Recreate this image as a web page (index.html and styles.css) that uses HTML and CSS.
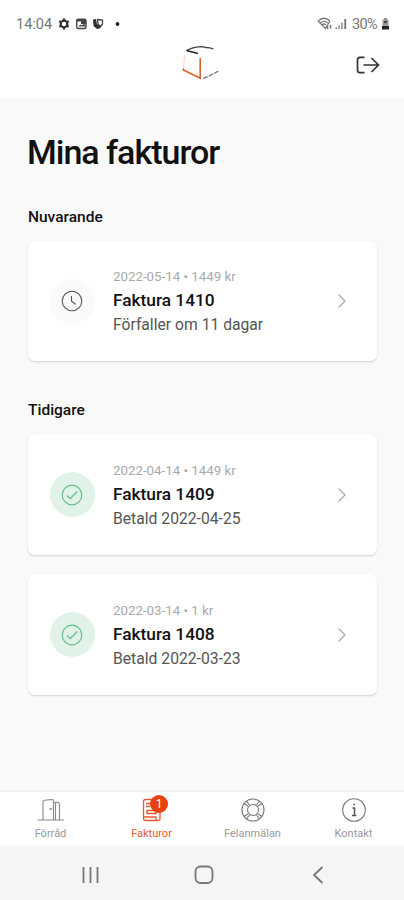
FILE: index.html
```
<!DOCTYPE html>
<html lang="sv">
<head>
  <meta charset="UTF-8">
  <meta name="viewport" content="width=device-width, initial-scale=1.0">
  <title>Mina fakturor</title>
  <link rel="stylesheet" href="styles.css">
</head>
<body>

<header>
  <div class="status">
    <span class="klocka">14:04</span>
    <svg class="notiser" width="64" height="14" viewBox="0 0 64 14">
      <path d="M6 1.500v2M6 10.500v2M1.300 4.300l1.700 1M9 8.700l1.700 1M1.300 9.700l1.700-1M9 5.300l1.700-1" stroke="#333" stroke-width="2.400"/>
      <circle cx="6" cy="7" r="3.300" fill="none" stroke="#333" stroke-width="2.200"/>
      <rect x="18.700" y="2.200" width="9.300" height="9.300" rx="1.500" fill="none" stroke="#444" stroke-width="1.400"/>
      <path d="M19 2.500h9v2h-9zM23 4h5v3h-5zM20 9.500l2.500-2 1.500 1 2-2 2 3" fill="#444"/>
      <path d="M35 2.500l3-.5 1 5 4.500 2.500-2 2-2.500.5-3.500-3z" fill="#333"/>
      <path d="M39.500 2.500l5 .5v4l-2 2.500-2.500-2.500z" fill="none" stroke="#444" stroke-width="1.300"/>
      <circle cx="59.500" cy="7" r="1.900" fill="#222"/>
    </svg>
    <svg class="signal" width="33" height="14" viewBox="0 0 33 14">
      <g fill="none" stroke="#777" stroke-width="1.200">
        <path d="M1 4Q7-1.500 13 4M3 6Q7 2.500 11 6M5 8Q7 6 9 8M1 4L8.500 11.500L13 4"/>
        <path d="M10.500 12V8.500M13.500 8v3.500" stroke-width="1.500"/>
      </g>
      <path d="M18.500 10.500h1.500V12h-1.500zM21.400 8.500h1.300V12h-1.300zM24.300 5.500h1.300V12h-1.300zM27.300 2h1.900v10h-1.900z" fill="#777"/>
    </svg>
    <span class="procent">30%</span>
    <svg class="batteri" width="9" height="12" viewBox="0 0 9 12">
      <path d="M3 0h3v1.500h1.500V8h-6V1.500H3z" fill="#999"/>
      <path d="M3 3h3v2H3z" fill="#444"/>
      <path d="M1 8h7v3.500H1z" fill="#222"/>
    </svg>
  </div>
  <div class="topp">
    <svg class="logga" width="40" height="38" viewBox="181 43 40 38" fill="none">
      <path d="M186.500 50.500Q193 46.800 203 46.600L206 47.500Q210 47.500 213.500 49" stroke="#444" stroke-width="1.300"/>
      <path d="M186.500 50.500L198 53.500" stroke="#222" stroke-width="1.500"/>
      <path d="M184.500 55L183.600 69" stroke="#f8d5c3" stroke-width="1"/>
      <path d="M183.400 68.500V70L200.200 78.200V58" stroke="#d9622b" stroke-width="1.600"/>
      <path d="M203 78.400L208 76.500L218.500 71" stroke="#777" stroke-width="1.200" stroke-dasharray="5 1"/>
    </svg>
    <svg class="loggaut" width="24" height="18" viewBox="0 0 24 18" fill="none" stroke="#333" stroke-width="1.700">
      <path d="M8.500 1.300H4Q1.500 1.300 1.500 4V14Q1.500 16.700 4 16.700H8.500M7.500 9H22.500M15.500 2L22.500 9L15.500 16"/>
    </svg>
  </div>
</header>

<main>
  <h1>Mina fakturor</h1>

  <h2>Nuvarande</h2>
  <div class="faktura nuvarande">
    <div class="ikon">
      <svg width="22" height="22" viewBox="0 0 22 22" fill="none" stroke="#555" stroke-width="1.100">
        <circle cx="11" cy="11" r="9.800"/>
        <path d="M10.500 6V11.300L14.500 14.300"/>
      </svg>
    </div>
    <div class="info">
      <p class="datum">2022-05-14 • 1449 kr</p>
      <h3>Faktura 1410</h3>
      <p class="text">Förfaller om 11 dagar</p>
    </div>
    <svg class="pil" width="10" height="16" viewBox="0 0 10 16"><path d="M1.500 1.500L8 8L1.500 14.500"/></svg>
  </div>

  <h2>Tidigare</h2>
  <div class="faktura">
    <div class="ikon betald">
      <svg width="22" height="22" viewBox="0 0 22 22" fill="none" stroke="#62bd8a" stroke-width="1.200">
        <circle cx="11" cy="11" r="9.800"/>
        <path d="M6 11.500L9.300 14.700L16.200 7.500"/>
      </svg>
    </div>
    <div class="info">
      <p class="datum">2022-04-14 • 1449 kr</p>
      <h3>Faktura 1409</h3>
      <p class="text">Betald 2022-04-25</p>
    </div>
    <svg class="pil" width="10" height="16" viewBox="0 0 10 16"><path d="M1.500 1.500L8 8L1.500 14.500"/></svg>
  </div>
  <div class="faktura">
    <div class="ikon betald">
      <svg width="22" height="22" viewBox="0 0 22 22" fill="none" stroke="#62bd8a" stroke-width="1.200">
        <circle cx="11" cy="11" r="9.800"/>
        <path d="M6 11.500L9.300 14.700L16.200 7.500"/>
      </svg>
    </div>
    <div class="info">
      <p class="datum">2022-03-14 • 1 kr</p>
      <h3>Faktura 1408</h3>
      <p class="text">Betald 2022-03-23</p>
    </div>
    <svg class="pil" width="10" height="16" viewBox="0 0 10 16"><path d="M1.500 1.500L8 8L1.500 14.500"/></svg>
  </div>
</main>

<!-- Flikar -->
<nav>
  <a class="flik">
    <svg width="28" height="24" viewBox="0 0 28 24" fill="none" stroke="#888" stroke-width="1.100">
      <path d="M.500 22H27M6 22V4Q6 2.500 7.500 2.300L15 1.500Q16.500 1.500 16.500 3V22M16.500 4L21 4.500Q22.500 5 22.500 6V22M18.500 4.500V22"/>
      <path d="M12.500 11H15" stroke-width="1.500"/>
    </svg>
    <span>Förråd</span>
  </a>
  <a class="flik aktiv">
    <svg width="28" height="24" viewBox="0 0 28 24" fill="none" stroke="#ea5a30" stroke-width="1.300">
      <path d="M17 1.500H7.500Q5.500 1.500 5.500 3.500V20.500Q5.500 22.500 8 22.500H20Q22 22.500 22 20.500V13M8 5.500H13M8 8.500H12M5.500 19H18V22.500"/>
      <path d="M9 12.500H18V15.500H9z" stroke-width="1.500"/>
    </svg>
    <b class="antal">1</b>
    <span>Fakturor</span>
  </a>
  <a class="flik">
    <svg width="28" height="24" viewBox="0 0 28 24" fill="none" stroke="#777" stroke-width="1.100">
      <circle cx="14" cy="12" r="11"/>
      <circle cx="14" cy="12" r="5.500"/>
      <path d="M9 8L5 5.500M10.500 7L7.500 3M19 8L23 5.500M17.500 7L20.500 3M9 16L5 18.500M10.500 17L7.500 21M19 16L23 18.500M17.500 17L20.500 21"/>
    </svg>
    <span>Felanmälan</span>
  </a>
  <a class="flik">
    <svg width="28" height="24" viewBox="0 0 28 24" fill="none" stroke="#777" stroke-width="1.100">
      <circle cx="14" cy="12" r="11.300"/>
      <path d="M12.500 10H14.500V17.300M12 17.500H16.500M13.300 6.500H15" stroke="#555" stroke-width="1.500"/>
    </svg>
    <span>Kontakt</span>
  </a>
</nav>

<footer>
  <svg width="18" height="18" viewBox="0 0 18 18"><path d="M1.500 1V17M8.500 1V17M15.500 1V17"/></svg>
  <svg class="hem" width="20" height="20" viewBox="0 0 20 20"><rect x="1.500" y="1.500" width="17" height="16.500" rx="5"/></svg>
  <svg width="12" height="18" viewBox="0 0 12 18"><path d="M10.500 1L2 9L10.500 17"/></svg>
</footer>

</body>
</html>
```

FILE: styles.css
```
* {
  margin: 0;
  padding: 0;
  box-sizing: border-box;
}
body {
  font-family: Roboto, "Liberation Sans", sans-serif;
  background-color: #f9f9f9;
  color: #111;
  height: 900px;
  display: flex;
  flex-direction: column;
  overflow: hidden;
}
svg {
  display: block;
  flex: none;
}
header {
  background-color: #fff;
  height: 98px;
}
.status {
  display: flex;
  align-items: center;
  height: 43px;
  padding: 5px 14px 0 16px;
  font-size: 14.5px;
  color: #777;
}
.klocka {
  width: 42px;
}
.signal {
  margin-left: auto;
  margin-right: 2px;
}
.procent {
  width: 29px;
  letter-spacing: -0.6px;
}
.topp {
  display: grid;
  grid-template-columns: 1fr 40px 1fr;
  align-items: center;
  padding: 0 24px 0 22px;
  height: 43px;
}
.logga {
  grid-column: 2;
  margin-top: -5px;
}
.loggaut {
  justify-self: end;
  margin-top: 1px;
}
main {
  flex: 1;
  padding: 33px 27px 0 28px;
}
h1 {
  font-size: 34px;
  font-weight: 500;
  line-height: 42px;
  letter-spacing: -1px;
  margin-left: -1px;
  margin-bottom: 33px;
}
h2 {
  font-size: 15.5px;
  font-weight: 500;
  line-height: 22px;
  margin-bottom: 13px;
}
.faktura {
  display: flex;
  align-items: center;
  height: 121px;
  padding: 0 30px 0 22px;
  margin-bottom: 19px;
  background: white;
  border-radius: 7px;
  box-shadow: 0 1px 2px rgba(0,0,0,0.16);
}
.nuvarande {
  height: 120px;
  margin-bottom: 38px;
}
.ikon {
  display: flex;
  align-items: center;
  justify-content: center;
  width: 45px;
  height: 45px;
  padding-right: 1px;
  border-radius: 50%;
  background-color: #fafafa;
}
.betald {
  background-color: #e1f3e8;
}
.info {
  flex: 1;
  margin-left: 18px;
  padding-top: 2px;
}
.datum {
  font-size: 13.3px;
  line-height: 20px;
  color: #aaa;
}
h3 {
  font-size: 17.3px;
  font-weight: 500;
  line-height: 26px;
}
.text {
  font-size: 15.7px;
  line-height: 24px;
  color: #555;
}
.pil path {
  fill: none;
  stroke: #aaa;
  stroke-width: 1.3;
}
nav {
  display: grid;
  grid-template-columns: repeat(4, 1fr);
  height: 54px;
  background-color: #fff;
  box-shadow: 0 -1px 2px rgba(0,0,0,0.06);
}
.flik {
  position: relative;
  display: flex;
  flex-direction: column;
  align-items: center;
  padding-top: 6px;
  font-size: 11px;
  line-height: 14px;
  color: #999;
}
.flik span {
  margin-top: 5px;
}
.aktiv {
  color: #ea5a30;
}
/* Antal obetalda fakturor */
.antal {
  position: absolute;
  left: 49px;
  top: 3px;
  width: 18px;
  height: 18px;
  border-radius: 50%;
  background-color: #e8420f;
  color: white;
  font-size: 12px;
  font-weight: 400;
  line-height: 18px;
  text-align: center;
}
footer {
  display: flex;
  align-items: center;
  justify-content: space-between;
  height: 54px;
  padding: 3px 80px 0 82px;
  background-color: #f5f5f5;
}
footer svg {
  fill: none;
  stroke: #777;
  stroke-width: 1.8;
}
.hem {
  margin-right: 4px;
}
```
